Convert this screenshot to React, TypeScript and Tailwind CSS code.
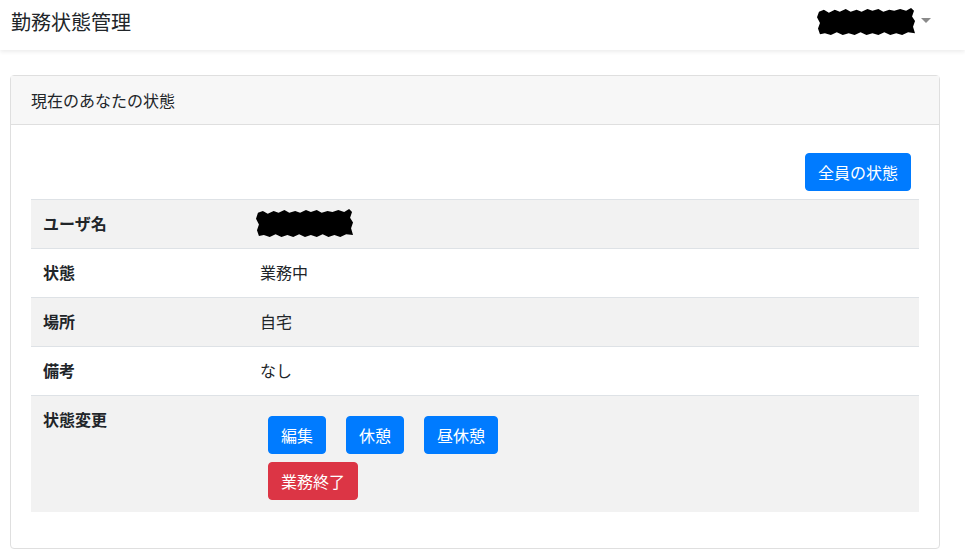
import React from 'react';

const jp = "font-['Noto_Sans_CJK_JP','Noto_Sans',sans-serif]";

// black marker scribble used to hide a personal name
function Scribble({ w, h }: { w: number; h: number }) {
    return (
        <svg width={w} height={h} viewBox="0 0 100 30" preserveAspectRatio="none">
            <path
                d="M2 4 L7 2 L12 5 L18 2 L23 4 L29 1 L34 4 L40 2 L45 4 L51 1 L56 3 L62 1 L67 4 L73 2 L78 3 L84 1 L90 3 L95 0 L98 3 L96 9 L99 14 L97 20 L99 27 L92 26 L86 29 L80 27 L74 29 L68 26 L62 29 L56 27 L50 29 L44 26 L38 29 L32 27 L26 29 L20 26 L14 29 L8 27 L3 28 L1 22 L3 16 L0 10 Z"
                fill="#000"
            />
        </svg>
    );
}

function Btn({ children, danger }: { children: React.ReactNode; danger?: boolean }) {
    return (
        <button
            className={
                danger
                    ? 'inline-block h-[38px] px-3 rounded border border-[#dc3545] bg-[#dc3545] text-white text-base leading-6'
                    : 'inline-block h-[38px] px-3 rounded border border-[#007bff] bg-[#007bff] text-white text-base leading-6'
            }
        >
            {children}
        </button>
    );
}

export default function App() {
    return (
        <div className={`min-h-screen bg-white text-[#212529] ${jp}`}>
            {/* Navbar */}
            <nav className="h-[50px] flex items-center justify-between pl-[11px] pr-[34px] bg-white shadow-[0_2px_4px_rgba(0,0,0,0.075)]">
                <div className="text-xl leading-[30px] -mt-[6px]">勤務状態管理</div>
                <div className="flex items-center gap-[5px] -mt-[6px]">
                    <Scribble w={99} h={28} />
                    <span className="block w-0 h-0 border-t-[5px] border-t-[#8a8a8a] border-x-[5px] border-x-transparent -mt-[4px]"></span>
                </div>
            </nav>

            {/* Status card */}
            <div className="mt-[25px] mx-[10px] w-[930px] border border-[#dfdfdf] rounded">
                <div className="h-[49px] px-5 flex items-center bg-[#f7f7f7] border-b border-[#dfdfdf] text-base">
                    現在のあなたの状態
                </div>
                <div className="px-5 pt-[28px] pb-[36px]">
                    <div className="flex justify-end pr-2 mb-2">
                        <Btn>全員の状態</Btn>
                    </div>
                    <table className="w-full text-base border-collapse">
                        <tbody>
                            <tr className="bg-[#f2f2f2] border-t border-[#dee2e6]">
                                <th className="w-[217px] px-3 pt-[11px] pb-[13px] text-left font-bold leading-6">ユーザ名</th>
                                <td className="px-3 pt-[11px] pb-[13px] leading-6">
                                    <div className="-ml-1 h-6 flex items-center">
                                        <Scribble w={98} h={29} />
                                    </div>
                                </td>
                            </tr>
                            <tr className="border-t border-[#dee2e6]">
                                <th className="px-3 pt-[11px] pb-[13px] text-left font-bold leading-6">状態</th>
                                <td className="px-3 pt-[11px] pb-[13px] leading-6">業務中</td>
                            </tr>
                            <tr className="bg-[#f2f2f2] border-t border-[#dee2e6]">
                                <th className="px-3 pt-[11px] pb-[13px] text-left font-bold leading-6">場所</th>
                                <td className="px-3 pt-[11px] pb-[13px] leading-6">自宅</td>
                            </tr>
                            <tr className="border-t border-[#dee2e6]">
                                <th className="px-3 pt-[11px] pb-[13px] text-left font-bold leading-6">備考</th>
                                <td className="px-3 pt-[11px] pb-[13px] leading-6">なし</td>
                            </tr>
                            <tr className="bg-[#f2f2f2] border-t border-[#dee2e6]">
                                <th className="px-3 pt-[11px] pb-3 text-left font-bold leading-6 align-top">状態変更</th>
                                <td className="p-3 leading-6">
                                    <div className="flex gap-5 ml-2 mt-2">
                                        <Btn>編集</Btn>
                                        <Btn>休憩</Btn>
                                        <Btn>昼休憩</Btn>
                                    </div>
                                    <div className="ml-2 mt-2">
                                        <Btn danger>業務終了</Btn>
                                    </div>
                                </td>
                            </tr>
                        </tbody>
                    </table>
                </div>
            </div>
        </div>
    );
}
